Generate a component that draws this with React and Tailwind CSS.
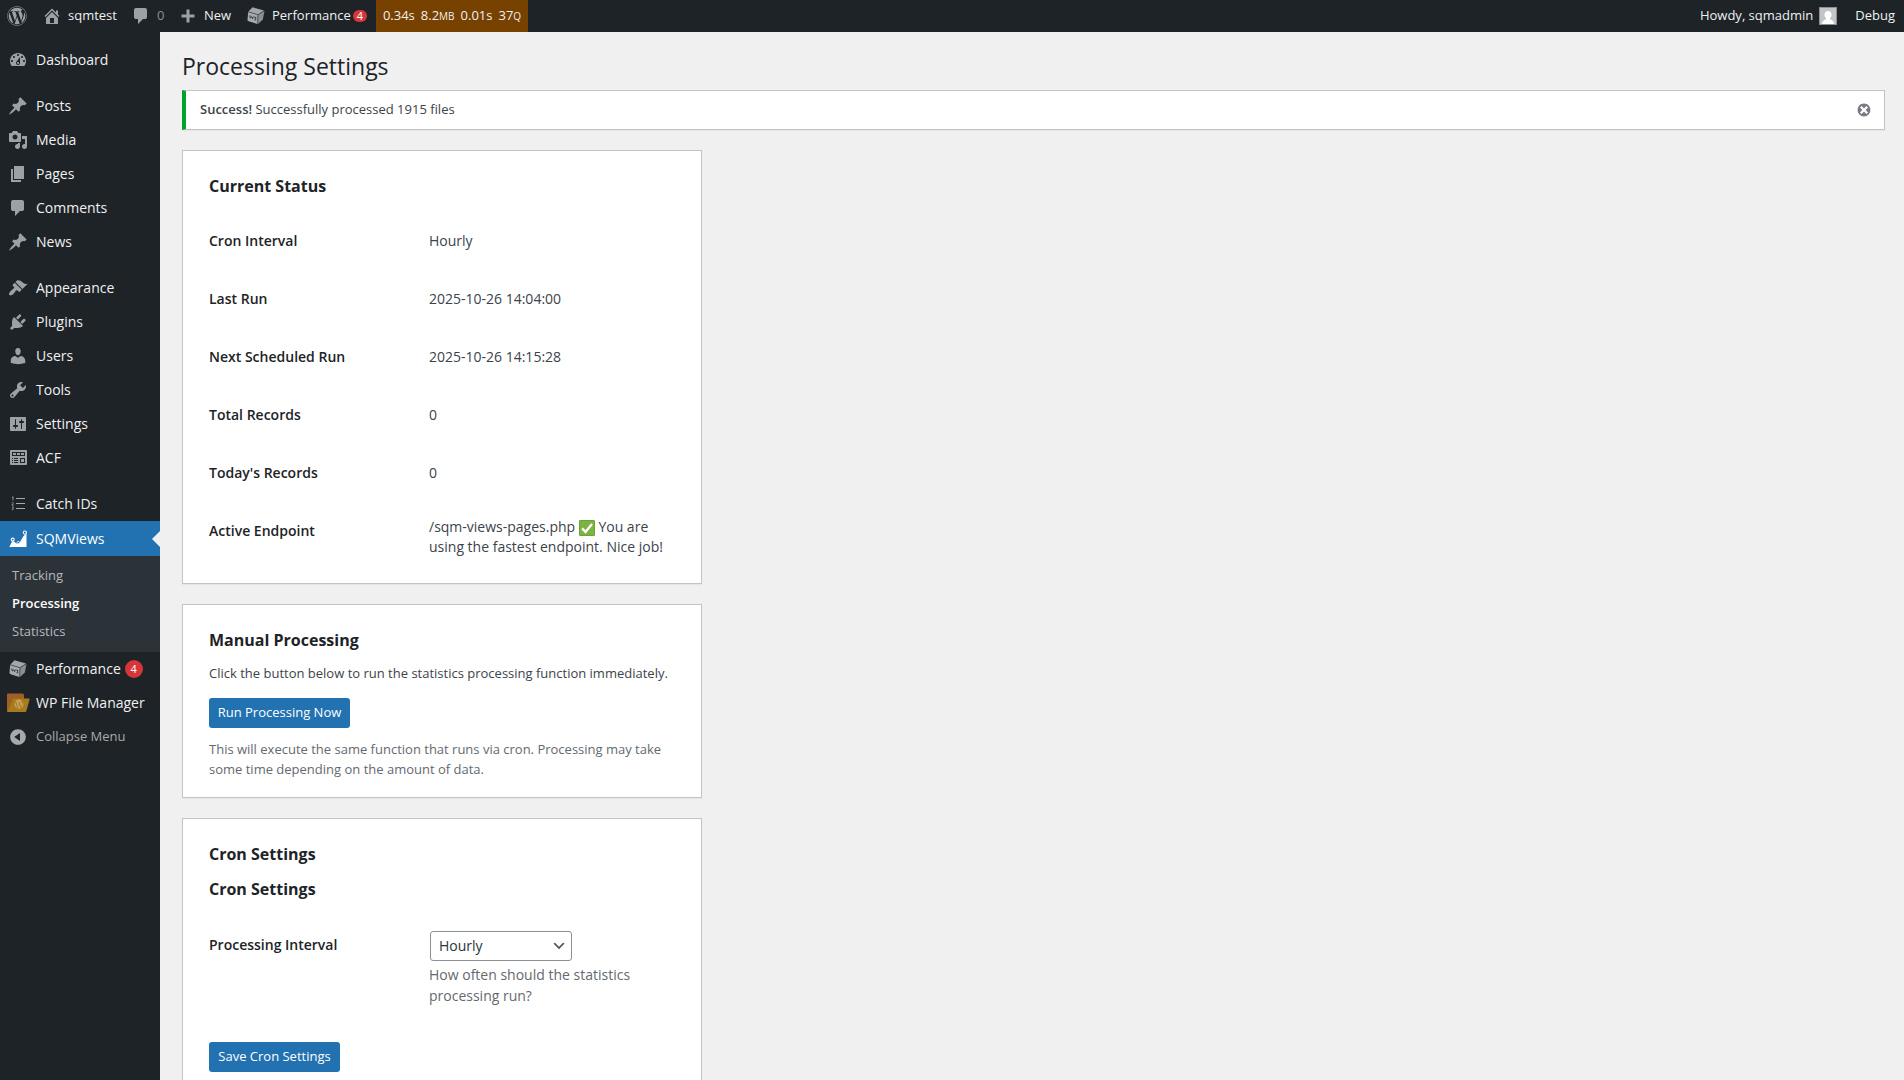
import React from "react";
import { FaWordpress } from "react-icons/fa";

const ICONS = {
  dashboard:
    "M3.76 16h12.48c1.1-1.37 1.76-3.11 1.76-5 0-4.42-3.58-8-8-8s-8 3.58-8 8c0 1.89.66 3.63 1.76 5zM10 4c.55 0 1 .45 1 1s-.45 1-1 1-1-.45-1-1 .45-1 1-1zM6 6c.55 0 1 .45 1 1s-.45 1-1 1-1-.45-1-1 .45-1 1-1zm8 0c.55 0 1 .45 1 1s-.45 1-1 1-1-.45-1-1 .45-1 1-1zm-5.37 5.55L12 7v6c0 1.1-.9 2-2 2s-2-.9-2-2c0-.57.24-1.08.63-1.45zM4 10c.55 0 1 .45 1 1s-.45 1-1 1-1-.45-1-1 .45-1 1-1zm12 0c.55 0 1 .45 1 1s-.45 1-1 1-1-.45-1-1 .45-1 1-1zm-5 3c0-.55-.45-1-1-1s-1 .45-1 1 .45 1 1 1 1-.45 1-1z",
  pin: "M10.44 3.02l1.82-1.82 6.36 6.35-1.83 1.82c-1.05-.68-2.48-.57-3.41.36l-.75.75c-.92.93-1.04 2.35-.35 3.41l-1.83 1.82-2.41-2.41-2.8 2.79c-.42.42-3.38 2.71-3.8 2.29s1.86-3.39 2.28-3.81l2.79-2.79L4.1 9.36l1.83-1.82c1.05.69 2.48.57 3.4-.36l.75-.75c.93-.92 1.05-2.35.36-3.41z",
  media:
    "M13 11V4c0-.55-.45-1-1-1h-1.67L9 1H5L3.67 3H2c-.55 0-1 .45-1 1v7c0 .55.45 1 1 1h10c.55 0 1-.45 1-1zM7 4.5c1.38 0 2.5 1.12 2.5 2.5S8.38 9.5 7 9.5 4.5 8.38 4.5 7 5.62 4.5 7 4.5zM14 6h5v10.5c0 1.38-1.12 2.5-2.5 2.5S14 17.88 14 16.5s1.12-2.5 2.5-2.5c.17 0 .34.02.5.05V9h-3V6zm-4 8.05V13h2v3.5c0 1.38-1.12 2.5-2.5 2.5S7 17.88 7 16.5 8.12 14 9.5 14c.17 0 .34.02.5.05z",
  pages: "M6 15V2h10v13H6zm-1 1h8v2H3V5h2v11z",
  comments:
    "M5 2h9q.82 0 1.41.59T16 4v7q0 .82-.59 1.41T14 13h-2l-5 5v-5H5q-.82 0-1.41-.59T3 11V4q0-.82.59-1.41T5 2z",
  appearance:
    "M14.48 11.06L7.41 3.99l1.5-1.5c.5-.56 2.3-.47 3.51.32 1.21.8 1.43 1.28 2.91 2.1 1.18.64 2.45 1.26 4.45.85zm-.71.71L6.7 4.7 4.93 6.47c-.39.39-.39 1.02 0 1.41l1.06 1.06c.39.39.39 1.03 0 1.42-.6.6-1.43 1.11-2.21 1.69-.35.26-.7.53-1.01.84C1.43 14.23.4 16.08 1.4 17.07c.99 1 2.84-.03 4.18-1.36.31-.31.58-.66.85-1.02.57-.78 1.08-1.61 1.69-2.21.39-.39 1.02-.39 1.41 0l1.06 1.06c.39.39 1.02.39 1.41 0z",
  plugins:
    "M13.11 4.36L9.87 7.6 8 5.73l3.24-3.24c.35-.34 1.05-.2 1.56.32.52.51.66 1.21.31 1.55zm-8 1.77l.91-1.12 9.01 9.01-1.19.84c-.71.71-2.63 1.16-3.82 1.16H6.14L4.9 17.26c-.59.59-1.54.59-2.12 0-.59-.58-.59-1.53 0-2.12l1.24-1.24v-3.88c0-1.13.4-3.19 1.09-3.89zm7.26 3.97l3.24-3.24c.34-.35 1.04-.21 1.55.31.52.51.66 1.21.31 1.55l-3.24 3.25z",
  users:
    "M10 9.25c-2.27 0-2.73-3.44-2.73-3.44C7 4.02 7.82 2 9.97 2c2.16 0 2.98 2.02 2.71 3.81 0 0-.41 3.44-2.68 3.44zm0 2.57L12.72 10c2.39 0 4.52 2.33 4.52 4.53v2.49s-3.65 1.13-7.24 1.13c-3.65 0-7.24-1.13-7.24-1.13v-2.49c0-2.25 1.94-4.48 4.47-4.48z",
  tools:
    "M16.68 9.77c-1.34 1.34-3.3 1.67-4.95.99l-5.41 6.52c-.99.99-2.59.99-3.58 0s-.99-2.59 0-3.57l6.52-5.42c-.68-1.65-.35-3.61.99-4.95 1.28-1.28 3.12-1.62 4.72-1.06l-2.89 2.89 2.82 2.82 2.86-2.87c.53 1.58.18 3.39-1.08 4.65zM3.81 16.21c.4.39 1.04.39 1.43 0 .4-.4.4-1.04 0-1.43-.39-.4-1.03-.4-1.43 0-.39.39-.39 1.03 0 1.43z",
  settings:
    "M18 16V4c0-.55-.45-1-1-1H3c-.55 0-1 .45-1 1v12c0 .55.45 1 1 1h14c.55 0 1-.45 1-1zM8 11h1c.55 0 1 .45 1 1s-.45 1-1 1H8v1.5c0 .28-.22.5-.5.5s-.5-.22-.5-.5V13H6c-.55 0-1-.45-1-1s.45-1 1-1h1V5.5c0-.28.22-.5.5-.5s.5.22.5.5V11zm5-2h-1c-.55 0-1-.45-1-1s.45-1 1-1h1V5.5c0-.28.22-.5.5-.5s.5.22.5.5V7h1c.55 0 1 .45 1 1s-.45 1-1 1h-1v5.5c0 .28-.22.5-.5.5s-.5-.22-.5-.5V9z",
  widgets:
    "M19 16V3c0-.55-.45-1-1-1H3c-.55 0-1 .45-1 1v13c0 .55.45 1 1 1h15c.55 0 1-.45 1-1zM4 4h13v4H4V4zm1 1v2h3V5H5zm4 0v2h3V5H9zm4 0v2h3V5h-3zM4 10h1v1H4v-1zm2 0h4v1H6v-1zm6 0h5v5h-5v-5zm1 1v3h3v-3h-3zm-9 1h1v1H4v-1zm2 0h4v1H6v-1zm-2 2h1v1H4v-1zm2 0h4v1H6v-1z",
  home: "M16 8.5l1.53 1.53-1.06 1.06L10 4.6l-6.47 6.49-1.06-1.06L10 2.5l4 4v-2h2v4zm-6-2.46l6 5.99V18H4v-5.97zM12 17v-5H8v5h4z",
  plus: "M16.5 8.5v3h-5v5h-3v-5h-5v-3h5v-5h3v5z",
  collapse:
    "M10 2.16c4.33 0 7.84 3.51 7.84 7.84s-3.51 7.84-7.84 7.84S2.16 14.33 2.16 10 5.71 2.16 10 2.16zm2 11.72V6.12L6.18 9.97z",
  dismiss:
    "M10 2c4.42 0 8 3.58 8 8s-3.58 8-8 8-8-3.58-8-8 3.58-8 8-8zm5 11l-3-3 3-3-2-2-3 3-3-3-2 2 3 3-3 3 2 2 3-3 3 3z",
};

function Dash({ name, className = "size-5" }) {
  return (
    <svg viewBox="0 0 20 20" className={className} fill="currentColor" fillRule="evenodd" aria-hidden="true">
      <path d={ICONS[name]} />
    </svg>
  );
}

function Cube({ className = "size-5" }) {
  return (
    <svg viewBox="0 0 20 20" className={className} aria-hidden="true">
      <path d="M6.5 1.2 18 4.6 12 8.6 2.4 5.6z" fill="#a3a7ac" />
      <path d="M2.2 6 11.8 9 11.400 18 2.600 15.200q-1.200-.5-1.100-1.700z" fill="#a7abb0" />
      <path d="M12.300 9 18.500 5 16.800 13.600 12 18z" fill="#8b9096" />
      <path d="M2.400 5.800 12 8.800 18.200 4.800M12 8.800 11.700 17.800" fill="none" stroke="#5c6268" strokeWidth="0.600" />
      <path
        d="M3.800 9.400l.5 2.600 1.300-1.200 1 1.900.7-2.200M8.300 11l1.900.6-1 .9c1.300.6 1 1.900-.7 1.300"
        fill="none"
        stroke="#2c3338"
        strokeWidth="1"
      />
    </svg>
  );
}

function OrderedList() {
  return (
    <svg viewBox="0 0 20 20" className="size-5" fill="#a7aaad" aria-hidden="true">
      <path d="M8 4h9v1H8zM8 9h9v1H8zM8 14h9v1H8z" />
      <path
        d="M4 3.500l1-.8V6.500M3.800 8.700c.8-.6 1.800 0 1.400.8L3.800 11.100h2M3.800 13.100h1.700l-.9 1.100c1.300.2 1.100 1.900-.8 1.500"
        fill="none"
        stroke="#a7aaad"
        strokeWidth="0.800"
      />
    </svg>
  );
}

function AreaChart() {
  return (
    <svg viewBox="0 0 20 20" className="size-5" aria-hidden="true">
      <path d="M1.300 18 4.600 11.500 8.500 14.500 11.500 13.800 15.500 7 18.500 4.500V18z" fill="currentColor" />
      <g fill="#2271b1" stroke="currentColor" strokeWidth="1.100">
        <circle cx="4.700" cy="10.600" r="1.500" />
        <circle cx="16.900" cy="3.600" r="1.600" />
      </g>
      <circle cx="10.300" cy="13.600" r="1.200" fill="#2271b1" stroke="currentColor" strokeWidth="0.800" />
    </svg>
  );
}

function FolderIcon() {
  return (
    <div className="grid h-5 w-6 place-items-end">
      <svg viewBox="0 0 24 20" className="col-start-1 row-start-1 h-5 w-6" aria-hidden="true">
        <path d="M1 1.500q0-1 1-1h14.500q1.500 0 1.500 1.500V19H1z" fill="#a05f24" />
        <path d="M8 5.500H23q.9 0 .6 1L20.400 18q-.3 1-1.300 1H2.500q-1.200 0-.9-1L6.500 6.500q.4-1 1.500-1z" fill="#a67a1e" />
      </svg>
      <FaWordpress className="col-start-1 row-start-1 mr-1.5 mb-1 size-2.5 text-[#cfa963]" />
    </div>
  );
}

const GROUPS = [
  [["Dashboard", "dashboard"]],
  [
    ["Posts", "pin"],
    ["Media", "media"],
    ["Pages", "pages"],
    ["Comments", "comments"],
    ["News", "pin"],
  ],
  [
    ["Appearance", "appearance"],
    ["Plugins", "plugins"],
    ["Users", "users"],
    ["Tools", "tools"],
    ["Settings", "settings"],
    ["ACF", "widgets"],
  ],
];

function MenuItem({ label, icon, children }) {
  return (
    <li>
      <a href="#" className="flex h-[34px] items-center whitespace-nowrap text-sm text-[#f0f0f1]">
        <span className="flex w-9 shrink-0 justify-center text-[#9ca1a7]">{icon}</span>
        {label}
        {children}
      </a>
    </li>
  );
}

function Sidebar() {
  return (
    <nav aria-label="Main menu" className="flex w-40 shrink-0 flex-col bg-[#1d2327] pt-[11px]">
      <div className="flex flex-col gap-3">
        {GROUPS.map((group) => (
          <ul key={group[0][0]}>
            {group.map(([label, icon]) => (
              <MenuItem key={label} label={label} icon={<Dash name={icon} />} />
            ))}
          </ul>
        ))}
        <ul>
          <MenuItem label="Catch IDs" icon={<OrderedList />} />
          <li>
            <a href="#" className="relative flex h-[35px] items-center bg-[#2271b1] text-sm text-white">
              <span className="flex w-9 shrink-0 justify-center">
                <AreaChart />
              </span>
              SQMViews
              <span className="absolute right-0 top-1/2 -translate-y-1/2 border-8 border-l-0 border-transparent border-r-[#f0f0f1]" />
            </a>
            <ul className="bg-[#2c3338] py-1.5 text-[13px] text-[#b4b9be]">
              <li><a href="#" className="flex h-7 items-center px-3">Tracking</a></li>
              <li><a href="#" aria-current="page" className="flex h-7 items-center px-3 font-semibold text-white">Processing</a></li>
              <li><a href="#" className="flex h-7 items-center px-3">Statistics</a></li>
            </ul>
          </li>
          <MenuItem label="Performance" icon={<Cube />}>
            <span className="ml-1 flex size-[18px] items-center justify-center rounded-full bg-[#d63638] text-[11px] text-white">4</span>
          </MenuItem>
          <MenuItem label="WP File Manager" icon={<FolderIcon />} />
          <li>
            <button type="button" className="flex h-[34px] items-center text-[13px] text-[#a7aaad]">
              <span className="flex w-9 shrink-0 justify-center">
                <Dash name="collapse" />
              </span>
              Collapse Menu
            </button>
          </li>
        </ul>
      </div>
    </nav>
  );
}

function TopBar() {
  return (
    <header className="flex h-8 shrink-0 items-stretch justify-between bg-[#1d2327] text-[13px] text-[#f0f0f1]">
      <div className="flex items-stretch">
        <a href="#" aria-label="About WordPress" className="flex w-[34px] items-center justify-center text-[#9ca1a7]">
          <FaWordpress className="size-5" />
        </a>
        <a href="#" className="flex w-[95px] items-center gap-1.5 pl-2">
          <Dash name="home" className="size-5 text-[#9ca1a7]" />
          sqmtest
        </a>
        <a href="#" className="flex w-[49px] items-center gap-1.5 pl-[2px] text-[#8c8f94]">
          <Dash name="comments" className="size-5 text-[#9ca1a7]" />
          0
        </a>
        <a href="#" className="flex w-[65px] items-center gap-1.5">
          <Dash name="plus" className="size-5 text-[#9ca1a7]" />
          New
        </a>
        <a href="#" className="flex w-[133px] items-center gap-1.5 pl-[3px]">
          <Cube className="size-5" />
          <span>Performance</span>
          <span className="-ml-1 rounded-full bg-[#d63638] px-1 text-[11px] leading-3 text-white">4</span>
        </a>
        <a href="#" className="flex w-[152px] items-center justify-center gap-1.5 whitespace-nowrap bg-[#774100]">
          <span>0.34s</span>
          <span>8.2<span className="text-[10px]">MB</span></span>
          <span>0.01s</span>
          <span>37<span className="text-[10px]">Q</span></span>
        </a>
      </div>
      <div className="flex items-center gap-[18px] pr-[9px]">
        <a href="#" className="flex items-center gap-1.5">
          Howdy, sqmadmin
          <svg viewBox="0 0 18 18" className="size-[18px] border border-[#8c8f94]" aria-hidden="true">
            <path d="M0 0h18v18H0z" fill="#c3c4c7" />
            <path d="M9 3.500c2.400 0 4 1.900 4 4.200 0 1.700-.9 3-1.900 3.800v1.200c2.200.6 4.200 1.800 4.900 5.300H2c.7-3.500 2.700-4.700 4.900-5.300v-1.200C5.900 10.700 5 9.400 5 7.700c0-2.300 1.600-4.200 4-4.200z" fill="#fff" />
          </svg>
        </a>
        <a href="#">Debug</a>
      </div>
    </header>
  );
}

function Card({ children, className = "" }) {
  return (
    <section className={"max-w-[520px] border border-[#c3c4c7] bg-white px-[26px] shadow-[0_1px_1px_rgba(0,0,0,0.04)] " + className}>
      {children}
    </section>
  );
}

function CheckMark() {
  return (
    <svg viewBox="0 0 16 16" role="img" aria-label="Active" className="inline size-4 align-text-bottom">
      <rect x="0.500" y="0.500" width="15" height="15" rx="0.500" fill="#7cb342" stroke="#6aa336" />
      <path d="M3.200 8.400 6.500 12 13 4" fill="none" stroke="#fff" strokeWidth="2.400" />
    </svg>
  );
}

const STATUS = [
  ["Cron Interval", "Hourly"],
  ["Last Run", "2025-10-26 14:04:00"],
  ["Next Scheduled Run", "2025-10-26 14:15:28"],
  ["Total Records", "0"],
  ["Today's Records", "0"],
  ["Active Endpoint", <>/sqm-views-pages.php <CheckMark /> You are using the fastest endpoint. Nice job!</>],
];

const TH = "w-[210px] py-5 pr-2.5 text-left align-top text-sm leading-[18px] font-semibold text-[#1d2327]";
const H2 = "text-base leading-[22px] font-bold text-[#1d2327]";
const PRIMARY = "h-[30px] rounded-[3px] bg-[#2271b1] text-[13px] text-white";

export default function App() {
  return (
    <div className="flex h-screen flex-col overflow-hidden bg-[#f0f0f1] font-['Open_Sans',sans-serif] text-[13px] text-[#3c434a]">
      <TopBar />
      <div className="flex min-h-0 flex-1">
        <Sidebar />
        <main className="min-w-0 flex-1 overflow-y-auto pt-[18px] pr-[19px] pl-[22px] [scrollbar-width:none]">
          <h1 className="h-10 text-[23px] leading-8 text-[#1d2327]">Processing Settings</h1>

          <div role="status" className="mb-5 flex h-10 items-center justify-between border border-l-4 border-[#c3c4c7] border-l-[#00a32a] bg-white pr-3 pl-3.5 shadow-[0_1px_1px_rgba(0,0,0,0.04)]">
            <p><strong className="font-semibold">Success!</strong> Successfully processed 1915 files</p>
            <button type="button" aria-label="Dismiss this notice" className="text-[#787c82]">
              <Dash name="dismiss" className="size-4" />
            </button>
          </div>

          <Card className="mb-5 pt-6 pb-[11px]">
            <h2 className={H2}>Current Status</h2>
            <table className="mt-[15px] w-full">
              <tbody>
                {STATUS.map(([name, value]) => (
                  <tr key={name}>
                    <th scope="row" className={TH}>{name}</th>
                    <td className="px-2.5 py-[15px] align-middle text-sm leading-5">{value}</td>
                  </tr>
                ))}
              </tbody>
            </table>
          </Card>

          <Card className="mb-5 pt-6 pb-[18px]">
            <h2 className={H2}>Manual Processing</h2>
            <p className="mt-3 leading-5">Click the button below to run the statistics processing function immediately.</p>
            <button type="button" className={PRIMARY + " mt-[15px] w-[141px]"}>Run Processing Now</button>
            <p className="mt-[11px] leading-5 text-[#646970]">
              This will execute the same function that runs via cron. Processing may take some time depending on the amount of data.
            </p>
          </Card>

          <Card className="pt-6 pb-6">
            <h2 className={H2}>Cron Settings</h2>
            <h2 className={H2 + " mt-[13px]"}>Cron Settings</h2>
            <form onSubmit={(e) => e.preventDefault()}>
              <table className="mt-4 w-full">
                <tbody>
                  <tr>
                    <th scope="row" className={TH}><label htmlFor="interval">Processing Interval</label></th>
                    <td className="px-2.5 py-[15px]">
                      <div className="ml-px grid w-[142px] items-center">
                        <select id="interval" defaultValue="Hourly" className="col-start-1 row-start-1 h-[30px] appearance-none rounded-[3px] border border-[#8c8f94] bg-white pr-6 pl-2 text-sm text-[#2c3338]">
                          <option>Hourly</option>
                          <option>Twice Daily</option>
                          <option>Daily</option>
                        </select>
                        <svg viewBox="0 0 20 20" className="pointer-events-none col-start-1 row-start-1 mr-[5px] size-4 justify-self-end" aria-hidden="true">
                          <path d="M5 6l5 5 5-5 2 1-7 7-7-7 2-1z" fill="#555" />
                        </svg>
                      </div>
                      <p className="mt-[3px] text-sm leading-[21px] text-[#646970]">How often should the statistics processing run?</p>
                    </td>
                  </tr>
                </tbody>
              </table>
              <button type="submit" className={PRIMARY + " mt-[21px] w-[131px]"}>Save Cron Settings</button>
            </form>
          </Card>
        </main>
      </div>
    </div>
  );
}
